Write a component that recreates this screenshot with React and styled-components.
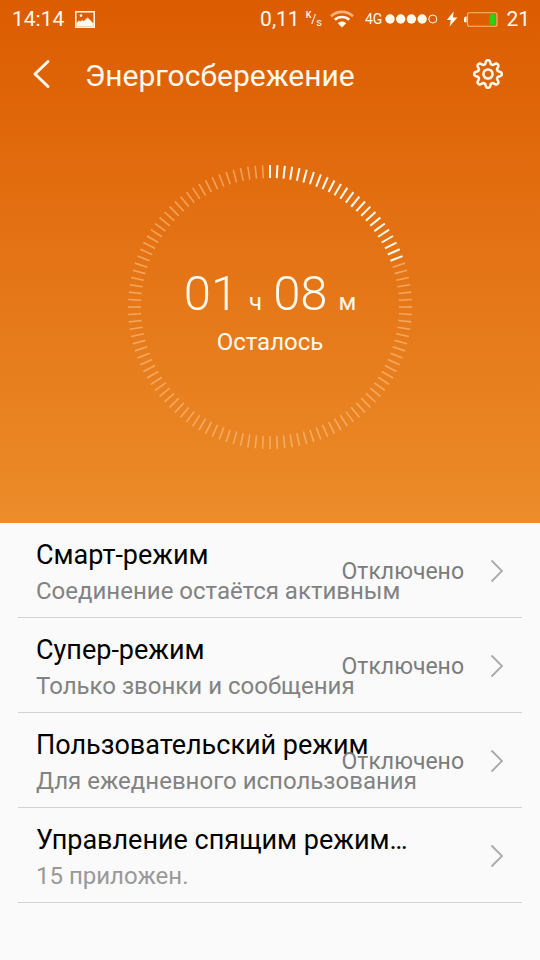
import styled, { createGlobalStyle } from 'styled-components';

const GlobalStyle = createGlobalStyle`
    * {
        box-sizing: border-box;
    }

    body {
        margin: 0;
        background: #fafafa;
        font-family: Roboto, 'Noto Sans', sans-serif;
    }
`;

const Hero = styled.header`
    display: flex;
    flex-direction: column;
    padding-bottom: 73px;
    color: #fffaf0;
    background: linear-gradient(#dc5c00, #ec8c2a);
`;

const StatusBar = styled.div`
    display: flex;
    align-items: center;
    justify-content: space-between;
    height: 38px;
    padding: 0 10px 0 12px;
    font-size: 21px;
    line-height: 24px;
`;

const StatusGroup = styled.div`
    display: flex;
    align-items: center;
    gap: ${({ $gap }) => $gap}px;
`;

const NetworkType = styled.span`
    font-size: 14px;
    line-height: 16px;
`;

const SpeedUnit = styled.span`
    display: flex;
    font-size: 12px;
    line-height: 20px;

    sup {
        font-size: 9px;
        font-weight: 500;
        line-height: 12px;
    }

    sub {
        font-size: 11px;
        line-height: 12px;
        align-self: flex-end;
    }
`;

const AppBar = styled.div`
    display: flex;
    align-items: center;
    height: 72px;
    padding: 0 36px 0 32px;
`;

const IconButton = styled.button`
    display: flex;
    padding: 0;
    border: none;
    color: inherit;
    background: none;
    cursor: pointer;
`;

const Title = styled.h1`
    flex: 1;
    margin: 0;
    padding: 4px 0 0 34px;
    font-size: 30px;
    font-weight: 400;
    line-height: 36px;
`;

const Dial = styled.div`
    display: grid;
    place-items: center;
    padding-top: 54px;

    > * {
        grid-area: 1 / 1;
    }
`;

const Remaining = styled.div`
    display: flex;
    flex-direction: column;
    align-items: center;
    padding-top: 14px;
`;

const Time = styled.div`
    display: flex;
    align-items: baseline;
    gap: 11px;
    font-size: 49px;
    font-weight: 300;
    line-height: 56px;
`;

const Unit = styled.span`
    font-size: 24px;
    font-weight: 400;
    line-height: 28px;
`;

const Caption = styled.div`
    font-size: 24px;
    line-height: 40px;
`;

const ModeList = styled.ul`
    margin: 0;
    padding: 0 18px;
    list-style: none;
`;

const ModeItem = styled.li`
    border-bottom: 1px solid #d2d2d2;
`;

const ModeButton = styled.button`
    display: grid;
    grid-template-columns: 1fr auto;
    align-items: center;
    width: 100%;
    height: 94px;
    padding: 2px 18px 0;
    border: none;
    background: none;
    font-family: inherit;
    text-align: left;
    cursor: pointer;
`;

const ModeText = styled.span`
    grid-area: 1 / 1;
    display: flex;
    flex-direction: column;
    min-width: 0;
    padding-top: 4px;
    white-space: nowrap;
`;

const ModeName = styled.span`
    color: #000;
    font-size: 27px;
    line-height: 36px;
`;

const ModeNote = styled.span`
    color: ${({ $muted }) => ($muted ? '#999' : '#828282')};
    font-size: 24px;
    line-height: 36px;
`;

// The state shares its cell with the text, so long names run under it
const ModeState = styled.span`
    grid-area: 1 / 1;
    justify-self: end;
    padding: 2px 26px 0 0;
    color: #7c7c7c;
    font-size: 23px;
    line-height: 36px;
`;

const modes = [
    { id: 1, name: 'Смарт-режим', note: 'Соединение остаётся активным', state: 'Отключено' },
    { id: 2, name: 'Супер-режим', note: 'Только звонки и сообщения', state: 'Отключено' },
    { id: 3, name: 'Пользовательский режим', note: 'Для ежедневного использования', state: 'Отключено' },
    { id: 4, name: 'Управление спящим режим…', note: '15 приложен.', muted: true }
];

const TICKS = 120;
const ACTIVE_TICKS = 24;

const TickRing = () => (
    <svg width="286" height="286" viewBox="-143 -143 286 286" aria-hidden="true">
        {Array.from({ length: TICKS }, (_, i) => (
            <line
                key={i}
                y1="-142"
                y2="-129"
                stroke={i < ACTIVE_TICKS ? '#fffaf0' : '#ffc48c'}
                strokeOpacity={i < ACTIVE_TICKS ? 1 : 0.6}
                strokeWidth={i < ACTIVE_TICKS ? 2 : 1.6}
                transform={`rotate(${(i * 360) / TICKS})`}
            />
        ))}
    </svg>
);

const PictureIcon = () => (
    <svg width="20" height="17" viewBox="0 0 20 17" aria-hidden="true">
        <rect x="0.8" y="0.8" width="18.4" height="15.4" fill="none" stroke="currentColor" strokeWidth="1.5" />
        <circle cx="6" cy="4.6" r="1.3" fill="currentColor" />
        <path d="M1.5 15.5V12L4 9.6l1.5.8L7.2 9l1.3 1.2L4.5 14 12.6 6.6l5.9 6v2.9z" fill="currentColor" />
    </svg>
);

const WifiIcon = () => (
    <svg width="24" height="18" viewBox="0 0 24 18" fill="none" strokeWidth="2.6" aria-hidden="true">
        <path d="M1 6.2C7 .4 17 .4 23 6.2" stroke="#ffb27a" />
        <path d="M4.8 9.8c4-3.8 10.4-3.8 14.4 0" stroke="currentColor" />
        <path d="M7.8 13.2c2.4-2.2 6-2.2 8.4 0L12 17.4z" fill="currentColor" />
    </svg>
);

const SignalDots = () => (
    <svg width="53" height="12" viewBox="0 0 53 12" fill="currentColor" aria-hidden="true">
        <circle cx="5" cy="6" r="4.7" />
        <circle cx="15.7" cy="6" r="4.7" />
        <circle cx="26.4" cy="6" r="4.7" />
        <circle cx="37.1" cy="6" r="4.7" />
        <circle cx="47.8" cy="6" r="4" fill="none" stroke="currentColor" />
    </svg>
);

const BoltIcon = () => (
    <svg width="12" height="16" viewBox="0 0 12 16" aria-hidden="true">
        <path d="M7.6.5.8 9h4L3.6 15.5 11.4 6.6H7z" fill="currentColor" />
    </svg>
);

const BatteryIcon = () => (
    <svg width="34" height="15" viewBox="0 0 34 15" aria-hidden="true">
        <path d="M2.6 4.5A3 3 0 0 0 2.6 10.5z" fill="currentColor" />
        <rect x="3.5" y="0.8" width="29.5" height="13.4" rx="2" fill="none" stroke="#ffb878" strokeWidth="1.1" />
        <rect x="25.5" y="2.2" width="6" height="10.6" fill="#2bd013" />
    </svg>
);

const BackIcon = () => (
    <svg width="19" height="30" viewBox="0 0 19 30" fill="none" aria-hidden="true">
        <path d="M16 2.5 3 15l13 12.5" stroke="currentColor" strokeWidth="3" strokeLinecap="round" strokeLinejoin="round" />
    </svg>
);

// Eight rounded teeth, drawn as a smooth wave around the hub
const gearPoints = Array.from({ length: 144 }, (_, i) => {
    const angle = (i * Math.PI) / 72;
    const wave = Math.tanh(1.4 * Math.cos(angle * 8)) / Math.tanh(1.4);
    const radius = 11.9 + 1.9 * wave;
    return `${(Math.sin(angle) * radius).toFixed(2)},${(-Math.cos(angle) * radius).toFixed(2)}`;
}).join(' ');

const GearIcon = () => (
    <svg width="32" height="32" viewBox="-16 -16 32 32" fill="none" stroke="currentColor" strokeWidth="2.5" aria-hidden="true">
        <polygon points={gearPoints} strokeLinejoin="round" />
        <circle r="4.6" />
    </svg>
);

const Chevron = () => (
    <svg width="14" height="24" viewBox="0 0 14 24" fill="none" aria-hidden="true">
        <path d="M1.5 1.5 12 12 1.5 22.5" stroke="#aaa" strokeWidth="1.8" />
    </svg>
);

const App = () => {
    return (
        <>
            <GlobalStyle />
            <Hero>
                <StatusBar>
                    <StatusGroup $gap={11}>
                        <span>14:14</span>
                        <PictureIcon />
                    </StatusGroup>
                    <StatusGroup $gap={11}>
                        <StatusGroup $gap={8}>
                            <StatusGroup $gap={6}>
                                <span>0,11</span>
                                <SpeedUnit><sup>K</sup>/<sub>s</sub></SpeedUnit>
                            </StatusGroup>
                            <WifiIcon />
                        </StatusGroup>
                        <StatusGroup $gap={8}>
                            <StatusGroup $gap={3}>
                                <NetworkType>4G</NetworkType>
                                <SignalDots />
                            </StatusGroup>
                            <StatusGroup $gap={6}>
                                <BoltIcon />
                                <BatteryIcon />
                            </StatusGroup>
                            <span>21</span>
                        </StatusGroup>
                    </StatusGroup>
                </StatusBar>
                <AppBar>
                    <IconButton type="button" aria-label="Назад">
                        <BackIcon />
                    </IconButton>
                    <Title>Энергосбережение</Title>
                    <IconButton type="button" aria-label="Настройки">
                        <GearIcon />
                    </IconButton>
                </AppBar>
                <Dial>
                    <TickRing />
                    <Remaining>
                        <Time>
                            <span>01</span>
                            <Unit>ч</Unit>
                            <span>08</span>
                            <Unit>м</Unit>
                        </Time>
                        <Caption>Осталось</Caption>
                    </Remaining>
                </Dial>
            </Hero>
            <ModeList>
                {modes.map((mode) => (
                    <ModeItem key={mode.id}>
                        <ModeButton type="button">
                            <ModeText>
                                <ModeName>{mode.name}</ModeName>
                                <ModeNote $muted={mode.muted}>{mode.note}</ModeNote>
                            </ModeText>
                            {mode.state && <ModeState>{mode.state}</ModeState>}
                            <Chevron />
                        </ModeButton>
                    </ModeItem>
                ))}
            </ModeList>
        </>
    );
};

export default App;
